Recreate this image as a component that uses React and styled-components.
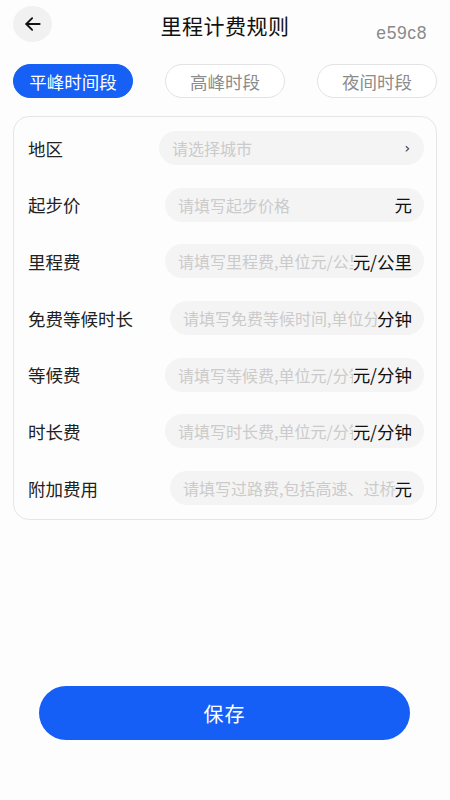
import React from "react";
import styled, { createGlobalStyle } from "styled-components";

const Global = createGlobalStyle`
  html, body { margin: 0; padding: 0; background: #fdfdfd; }
  body { font-family: "Noto Sans CJK SC", "Noto Sans", sans-serif; }
  * { box-sizing: border-box; }
`;

const Page = styled.div`
  width: 450px;
  height: 800px;
  background: #fdfdfd;
  display: flex;
  flex-direction: column;
  padding: 0 13px;
`;

const Header = styled.div`
  position: relative;
  height: 50px;
  display: flex;
  align-items: center;
  justify-content: center;
`;

const BackButton = styled.div`
  position: absolute;
  left: 0;
  top: 6px;
  width: 39px;
  height: 36px;
  border-radius: 50%;
  background: #f1f1f1;
  display: flex;
  align-items: center;
  justify-content: center;
`;

const Title = styled.div`
  font-size: 21px;
  color: #111;
  letter-spacing: 0.5px;
`;

const Code = styled.div`
  position: absolute;
  right: 10px;
  top: 23px;
  font-family: "Liberation Sans", Arial, sans-serif;
  font-size: 17.5px;
  color: #8a8a8a;
  letter-spacing: 0.6px;
`;

const Tabs = styled.div`
  display: flex;
  justify-content: space-between;
  margin-top: 14px;
`;

const Tab = styled.div`
  width: 120px;
  height: 34px;
  border-radius: 17px;
  display: flex;
  align-items: center;
  justify-content: center;
  font-size: 17.5px;
  background: ${(p) => (p.$active ? "#1660f6" : "#ffffff")};
  color: ${(p) => (p.$active ? "#ffffff" : "#8c8c8c")};
  border: 1px solid ${(p) => (p.$active ? "#1660f6" : "#e3e3e3")};
`;

const Card = styled.div`
  margin-top: 18px;
  width: 424px;
  border: 1px solid #e6e6e6;
  border-radius: 16px;
  background: #fdfdfd;
  padding: 14px 12px 14px 14px;
  display: flex;
  flex-direction: column;
  gap: 22.7px;
`;

const Row = styled.div`
  height: 34px;
  display: flex;
  align-items: center;
  justify-content: space-between;
`;

const Label = styled.div`
  font-size: 17.5px;
  color: #222;
`;

const Field = styled.div`
  width: ${(p) => p.$w}px;
  height: 34px;
  border-radius: 17px;
  background: #f4f4f4;
  display: flex;
  align-items: center;
  padding: 0 12px 0 13px;
`;

const Placeholder = styled.div`
  flex: 1;
  min-width: 0;
  overflow: hidden;
  white-space: nowrap;
  font-size: 16px;
  color: #cbcbcb;
`;

const Unit = styled.div`
  flex: none;
  font-size: 17.5px;
  color: #111;
`;

const Chevron = styled.div`
  flex: none;
  font-family: "DejaVu Sans", sans-serif;
  font-size: 14px;
  color: #333;
  margin-right: 2px;
`;

const Spacer = styled.div`
  flex: 1;
`;

const SaveButton = styled.div`
  margin: 0 27px 60px 26px;
  height: 54px;
  border-radius: 27px;
  background: #165ff6;
  color: #fff;
  font-size: 20px;
  display: flex;
  align-items: center;
  justify-content: center;
  letter-spacing: 1px;
`;

const rows = [
  { label: "地区", ph: "请选择城市", w: 265, chevron: true },
  { label: "起步价", ph: "请填写起步价格", unit: "元", w: 259 },
  { label: "里程费", ph: "请填写里程费,单位元/公里", unit: "元/公里", w: 259 },
  { label: "免费等候时长", ph: "请填写免费等候时间,单位分钟", unit: "分钟", w: 254 },
  { label: "等候费", ph: "请填写等候费,单位元/分钟", unit: "元/分钟", w: 259 },
  { label: "时长费", ph: "请填写时长费,单位元/分钟", unit: "元/分钟", w: 259 },
  { label: "附加费用", ph: "请填写过路费,包括高速、过桥费", unit: "元", w: 254 },
];

export default function App() {
  return (
    <>
      <Global />
      <Page>
        <Header>
          <BackButton>
            <svg width="20" height="20" viewBox="0 0 24 24" fill="none" stroke="#111" strokeWidth="2.2" strokeLinecap="round" strokeLinejoin="round">
              <path d="M20 12H4" />
              <path d="M11 5l-7 7 7 7" />
            </svg>
          </BackButton>
          <Title>里程计费规则</Title>
          <Code>e59c8</Code>
        </Header>
        <Tabs>
          <Tab $active>平峰时间段</Tab>
          <Tab>高峰时段</Tab>
          <Tab>夜间时段</Tab>
        </Tabs>
        <Card>
          {rows.map((r) => (
            <Row key={r.label}>
              <Label>{r.label}</Label>
              <Field $w={r.w}>
                <Placeholder>{r.ph}</Placeholder>
                {r.chevron ? <Chevron>›</Chevron> : <Unit>{r.unit}</Unit>}
              </Field>
            </Row>
          ))}
        </Card>
        <Spacer />
        <SaveButton>保存</SaveButton>
      </Page>
    </>
  );
}
